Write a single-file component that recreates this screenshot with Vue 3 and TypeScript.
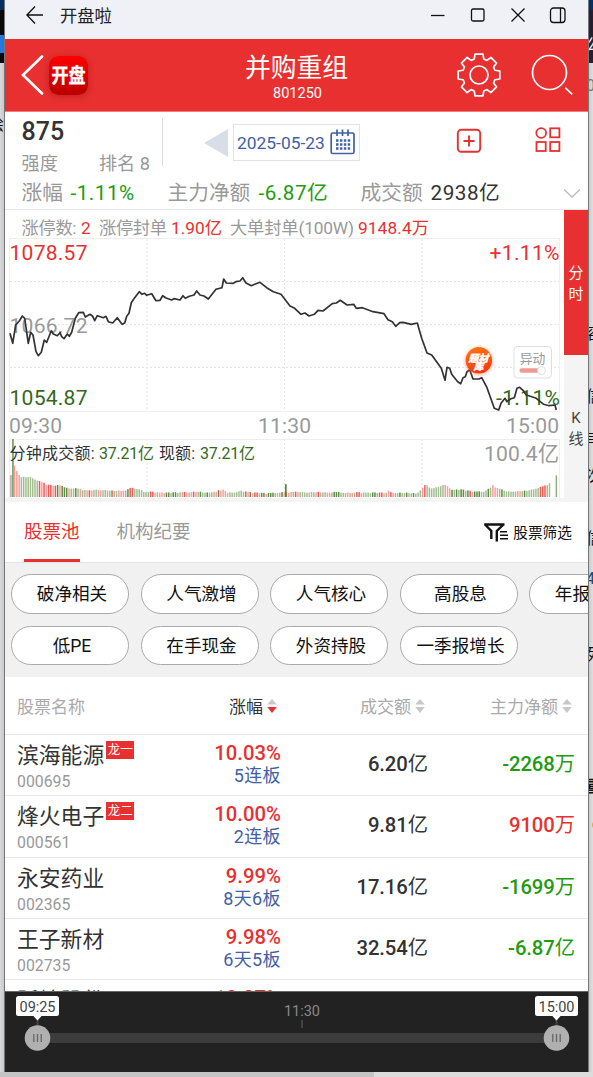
<script setup lang="ts">
interface Stock {
  name: string
  code: string
  tag?: string
  pct: string
  streak: string
  amount: string
  net: string
  unit: string
  up: boolean
}

const stocks: Stock[] = [
  { name: '滨海能源', code: '000695', tag: '龙一', pct: '10.03%', streak: '5连板', amount: '6.20', net: '-2268', unit: '万', up: false },
  { name: '烽火电子', code: '000561', tag: '龙二', pct: '10.00%', streak: '2连板', amount: '9.81', net: '9100', unit: '万', up: true },
  { name: '永安药业', code: '002365', pct: '9.99%', streak: '8天6板', amount: '17.16', net: '-1699', unit: '万', up: false },
  { name: '王子新材', code: '002735', pct: '9.98%', streak: '6天5板', amount: '32.54', net: '-6.87', unit: '亿', up: false },
  { name: '跃岭股份', code: '002725', pct: '10.07%', streak: '首板', amount: '4.12', net: '', unit: '', up: true }
]

const chipRows: string[][] = [
  ['破净相关', '人气激增', '人气核心', '高股息', '年报增长'],
  ['低PE', '在手现金', '外资持股', '一季报增长']
]

// Curve samples are stored in thirds of a pixel, afternoon relative to its own origin.
const morning = '30,295 38,325 47,270 58,258 67,243 74,250 85,325 92,292 99,300 108,350 115,362 124,352 133,315 140,322 154,287 160,297 172,302 180,293 185,305 192,311 202,297 208,304 215,292 226,250 236,233 250,232 256,246 270,238 278,244 284,257 292,242 310,248 318,244 325,260 338,264 352,248 366,268 374,264 380,244 387,235 394,203 403,190 418,170 426,178 434,175 440,181 455,176 468,197 480,196 488,182 498,189 515,195 522,191 540,195 549,182 556,190 568,184 582,180 590,168 600,180 612,183 625,192 648,163 666,158 671,132 679,144 700,145 708,140 720,138 728,128 738,144 754,152 768,146 780,142 800,158 820,170 843,178 870,213'
const afternoon = '5,220 24,238 36,234 48,243 64,238 75,226 90,228 118,206 130,204 142,196 162,210 182,208 190,220 208,218 240,230 273,236 285,254 298,260 308,274 320,263 330,262 355,268 373,264 386,310 402,354 416,360 445,400 456,436 462,397 470,400 476,418 494,440 503,446 510,428 517,425 522,410 530,404 540,432 558,432 566,428 582,458 604,520 617,525 624,505 636,490 642,500 652,492 664,488 672,460 680,457 690,466 700,480 712,484 730,490 752,508 768,512 786,510 790,525'

function samples(src: string, dx: number): number[][] {
  return src.split(' ').map((p) => {
    const [x, y] = p.split(',').map(Number)
    return [(x + dx) / 3 - 5, y / 3 + 25]
  })
}
const curve = [...samples(morning, 0), ...samples(afternoon, 879)]
const pricePath = 'M' + curve.map((p) => p[0].toFixed(1) + ' ' + p[1].toFixed(1)).join('L')

const volumeKeys: number[][] = [
  [43, 95], [50, 77], [57, 66], [64, 60], [92, 60], [110, 50], [130, 42], [140, 36], [165, 32], [180, 36], [195, 26], [240, 24], [250, 20], [270, 18], [290, 22], [340, 18], [380, 20], [390, 26], [418, 24], [430, 16], [460, 14], [500, 12], [590, 15], [620, 12], [650, 17], [672, 23], [680, 13], [712, 14], [720, 22], [730, 16], [760, 12], [800, 10], [850, 13], [870, 14], [939, 14], [1159, 12], [1163, 20], [1171, 13], [1249, 10], [1259, 18], [1267, 28], [1279, 38], [1289, 26], [1309, 28], [1334, 38], [1344, 32], [1354, 20], [1379, 22], [1419, 15], [1449, 15], [1469, 25], [1479, 36], [1486, 28], [1519, 16], [1579, 18], [1619, 28], [1644, 36], [1650, 46]
]
function volumeAt(x: number): number {
  for (let i = 1; i < volumeKeys.length; i++) {
    const a = volumeKeys[i - 1]
    const b = volumeKeys[i]
    if (x <= b[0]) return a[1] + ((b[1] - a[1]) * (x - a[0])) / (b[0] - a[0])
  }
  return 0
}
interface Bar { x: number; h: number; c: string }
const bars: Bar[] = [
  { x: 5.2, h: 22, c: '#aaaaaa' },
  { x: 7.2, h: 58, c: '#66934c' }
]
const reds = ['#f8a09d', '#f8a09d', '#ef5a58']
const greens = ['#a3bf92', '#a3bf92', '#5f8d45']
for (let i = 0; i < 237; i++) {
  const x = 43 + i * 6.8
  if (x > 1651) break
  const noise = (i * 37 + ((i * i) % 13)) % 7
  const red = i < 3 || (i > 10 && i < 19) || (Math.sin(i * 0.43) + Math.sin(i * 1.37) > 0.15 && i > 19 && i < 175) || (i > 175 && Math.sin(i * 0.6) > 0.75)
  const tone = noise > 4 ? 2 : 0
  bars.push({ x: x / 3 - 5.5, h: Math.max(3, (volumeAt(x) + noise * 0.5 - 1) / 3), c: red ? reds[tone] : greens[tone] })
}
bars.push({ x: 280.1, h: 12.8, c: '#3c7a1e' }, { x: 550.6, h: 21.7, c: '#8fb07c' })

const gearPath = (() => {
  const pts: string[] = []
  for (let i = 0; i < 8; i++) {
    const base = (i * Math.PI) / 4 - Math.PI / 2
    for (const [da, r] of [[-0.29, 16.6], [-0.19, 21.2], [0.19, 21.2], [0.29, 16.6]]) {
      pts.push((23 + r * Math.cos(base + da)).toFixed(2) + ' ' + (23 + r * Math.sin(base + da)).toFixed(2))
    }
  }
  return 'M' + pts.join('L') + 'Z'
})()
</script>

<template>
  <div class="desktop">
    <div class="edge left">
      <i class="navy"></i><i class="dark"></i><i class="blue"></i><i class="dark low"></i>
      <span class="clip l1">绘</span>
    </div>
    <main class="window">
      <header class="titlebar">
        <svg width="18" height="20" viewBox="0 0 18 20"><path d="M9 1.500L.9 10L9 18.500M1 10H17" /></svg>
        <span>开盘啦</span>
        <svg class="controls" width="140" height="18" viewBox="0 0 140 18">
          <path d="M1 9.500H14.500" /><rect x="41.500" y="3" width="12.500" height="12" rx="1.500" />
          <path d="M81.500 2.500L94.500 15.500M94.500 2.500L81.500 15.500" />
          <rect x="120.500" y="2" width="14.500" height="14.500" rx="3" /><path d="M130.500 2V16.500" />
        </svg>
      </header>

      <section class="hero">
        <div class="hero-left">
          <svg class="back" width="24" height="40" viewBox="0 0 24 40"><path d="M21 1.500L2 20L21 38.500" /></svg>
          <svg class="logo" width="39" height="39" viewBox="0 0 39 39">
            <defs><linearGradient id="lg" x2="0" y2="1"><stop stop-color="#ff0000" /><stop offset="1" stop-color="#b90000" /></linearGradient></defs>
            <rect width="39" height="39" rx="9" fill="url(#lg)" />
            <path d="M7 0V39M14 0V39M21 0V39M28 0V39M0 7H39M0 32H39" stroke="#d00" stroke-width=".5" opacity=".4" />
            <text x="2.500" y="27" textLength="34" lengthAdjust="spacingAndGlyphs" font-size="20.500" font-weight="700" fill="#fff" stroke="#fff" stroke-width=".35">开盘</text>
          </svg>
        </div>
        <div class="hero-title"><h1>并购重组</h1><p>801250</p></div>
        <div class="hero-right">
          <svg width="46" height="46" viewBox="0 0 46 46"><path :d="gearPath" /><circle cx="23" cy="23" r="9" /></svg>
          <svg width="44" height="46" viewBox="0 0 44 46"><circle cx="19.500" cy="20.500" r="17" /><path d="M35.200 35.700L42.200 42.300" /></svg>
        </div>
      </section>

      <section class="summary">
        <div class="strength">
          <b>875</b>
          <p><span>强度</span><span>排名 8</span></p>
        </div>
        <i class="prev"></i>
        <div class="date">
          <span>2025-05-23</span>
          <svg width="26" height="26" viewBox="0 0 26 26">
            <rect x="1.200" y="4" width="22.800" height="20.500" rx="1.500" /><path d="M7 .5V7M12.500 .5V7M18 .5V7" />
            <path class="dots" d="M6 11.500H20.500M6 15.500H20.500M6 19.500H20.500" />
          </svg>
        </div>
        <svg class="plus" width="26" height="26" viewBox="0 0 26 26"><rect x="1.800" y="1.800" width="22.400" height="22" rx="3.500" /><path d="M13 7.500V18.500M7.500 13H18.500" /></svg>
        <svg class="apps" width="26" height="26" viewBox="0 0 26 26"><circle cx="6.200" cy="6" r="4.900" /><rect x="15.200" y="1.300" width="9.200" height="9" /><rect x="1.500" y="15" width="9.200" height="9" /><rect x="15.200" y="15" width="9.200" height="9" /></svg>
      </section>
      <section class="metrics">
        <span>涨幅</span><b class="green">-1.11%</b><span>主力净额</span><b class="green">-6.87亿</b><span>成交额</span><b>2938亿</b>
        <svg width="18" height="11" viewBox="0 0 18 11"><path d="M1 1.500L9 9L17 1.500" /></svg>
      </section>

      <section class="intraday">
        <svg class="chart" width="559" height="292" viewBox="0 0 559 292">
          <g class="note">
            <text x="16.500" y="23.500" textLength="55">涨停数:</text><text class="red" x="76" y="23.500">2</text>
            <text x="94" y="23.500" textLength="68">涨停封单</text><text class="red" x="166" y="23.500" textLength="51">1.90亿</text>
            <text x="225" y="23.500" textLength="124">大单封单(100W)</text><text class="red" x="353" y="23.500" textLength="71">9148.4万</text>
          </g>
          <g class="frame"><rect x="4.500" y="28.500" width="550" height="173" /><path d="M4.500 288V229.500H554.500V288" /></g>
          <path class="grid" d="M5 71.500H554M5 114.500H554M5 157.500H554M142 29V201M279.500 29V201M417 29V201M142 229V287M279.500 229V287M417 229V287" />
          <rect v-for="(b, i) in bars" :key="i" :x="b.x" :y="287 - b.h" width="1.500" :height="b.h" :fill="b.c" />
          <g class="big">
            <text class="red" x="4.500" y="50" textLength="78">1078.57</text>
            <text class="gray" x="4.500" y="122.500" textLength="78">1066.72</text>
            <text class="dgreen" x="4.500" y="195" textLength="78">1054.87</text>
            <text class="red" x="484.500" y="50" textLength="70">+1.11%</text>
            <text class="gray" x="4" y="222.500" textLength="53">09:30</text>
            <text class="gray" x="253" y="222.500" textLength="53">11:30</text>
            <text class="gray" x="501" y="222.500" textLength="53">15:00</text>
            <text class="gray" x="479" y="251" textLength="75">100.4亿</text>
          </g>
          <g class="vol">
            <text x="4.500" y="248.500" textLength="85">分钟成交额:</text><text class="dgreen" x="94" y="248.500" textLength="55">37.21亿</text>
            <text x="154" y="248.500" textLength="36">现额:</text><text class="dgreen" x="195" y="248.500" textLength="55">37.21亿</text>
          </g>
          <g class="big"><text class="dgreen" x="491" y="195" textLength="64">-1.11%</text></g>
          <path class="price" :d="pricePath" />
          <defs><linearGradient id="og" x2=".3" y2="1"><stop stop-color="#ff7a10" /><stop offset="1" stop-color="#fa3a12" /></linearGradient></defs>
          <circle cx="473.800" cy="150.300" r="13.200" fill="url(#og)" class="glow" />
          <g class="badge-text"><text x="463.500" y="151.500" textLength="20" lengthAdjust="spacingAndGlyphs">题材</text><text x="468.500" y="159.500">库</text></g>
          <rect x="509" y="136.500" width="37.500" height="31.500" rx="3.500" fill="#fff" fill-opacity=".85" stroke="#dedede" />
          <text x="514.800" y="152.500" font-size="12.800" fill="#999" textLength="25.500">异动</text>
          <rect x="514.500" y="158.300" width="22" height="4.500" rx="2" fill="#ee9a97" /><circle cx="536.500" cy="160.500" r="4" fill="#fff" stroke="#ddd" />
        </svg>
        <aside><div class="on"><span>分</span><span>时</span></div><div><span>K</span><span>线</span></div></aside>
      </section>

      <nav class="tabs">
        <span class="active">股票池</span><span>机构纪要</span>
        <div class="filter">
          <svg width="25" height="20" viewBox="0 0 25 20"><path d="M.2 1.500H20.500M1.500 2L7.300 8V16M19 2L12.800 8V18.500" /><path class="thin" d="M16 8.700H23M16 12.200H24M16 15.700H24" /></svg>
          <span>股票筛选</span>
        </div>
      </nav>

      <section class="chips">
        <div v-for="(row, i) in chipRows" :key="i" class="chip-row"><button v-for="c in row" :key="c">{{ c }}</button></div>
      </section>

      <section class="table">
        <div class="thead">
          <span>股票名称</span>
          <span v-for="(h, i) in ['涨幅', '成交额', '主力净额']" :key="h" class="sort" :class="{ desc: i === 0 }">{{ h }}<svg width="10" height="14" viewBox="0 0 10 14"><path d="M5 0L9.800 5.500H.2Z" /><path class="down" d="M5 14L9.800 8H.2Z" /></svg></span>
        </div>
        <article v-for="s in stocks" :key="s.code">
          <div class="name"><p>{{ s.name }}<i v-if="s.tag">{{ s.tag }}</i></p><small>{{ s.code }}</small></div>
          <div class="change"><b>{{ s.pct }}</b><span>{{ s.streak }}</span></div>
          <div class="money"><b>{{ s.amount }}</b>亿</div>
          <div class="money" :class="s.up ? 'red' : 'green'"><b>{{ s.net }}</b>{{ s.unit }}</div>
        </article>
      </section>

      <footer class="timeline">
        <svg width="583" height="81" viewBox="0 0 583 81">
          <path d="M0 .5H583" stroke="#666" />
          <path d="M32.500 26V38M297 29V37M551.500 26V38" stroke="#444" stroke-width="2" />
          <rect x="32" y="42" width="520" height="10" fill="#3c3c3c" />
          <g v-for="(t, i) in ['09:25', '15:00']" :key="t" :transform="`translate(${i ? 551.5 : 32.5} 0)`">
            <path d="M-5 24H5L0 29.500Z" fill="#fff" /><rect x="-21.500" y="5" width="43" height="20" rx="2.500" fill="#fff" />
            <text x="0" y="20.500" text-anchor="middle" textLength="36" fill="#444">{{ t }}</text>
            <circle cy="47" r="12.800" fill="#b0b0b0" /><path d="M-3.700 43V51M0 43V51M3.700 43V51" stroke="#666" stroke-width="1.300" />
          </g>
          <text x="297" y="24.500" text-anchor="middle" textLength="36" fill="#888">11:30</text>
        </svg>
      </footer>
    </main>
    <div class="edge right">
      <i class="navy"></i><i class="plum"></i>
      <span class="clip r1">公</span><span class="clip r2">0</span><span class="clip r3">容</span><span class="clip r4">信</span><span class="clip r5">≣</span><span class="clip r6">次</span><span class="clip r7">信</span><span class="clip r8">4</span><span class="clip r9">列</span><span class="clip r10">重</span>
      <i class="dot"></i>
    </div>
    <i class="base"></i>
  </div>
</template>

<style>
body { background: #dedfe0; overflow: hidden; }
</style>

<style scoped>
* { box-sizing: border-box; }
.desktop { position: relative; display: flex; width: 593px; height: 1077px; overflow: hidden; background: #dedfe0; font-family: Roboto, "Noto Sans CJK SC", sans-serif; color: #333; }
.edge { position: relative; width: 5px; height: 1077px; overflow: hidden; }
.edge i { display: block; }
.left { border-right: 1px solid #777; background: linear-gradient(90deg, #d8d9da, #c8c9ca); }
.right { border-left: 1px solid #77787a; background: linear-gradient(90deg, #c9caca, #e0e0e1); }
.navy { height: 10px; background: #003068; }
.dark { height: 25px; background: #080808; }
.dark.low { height: 10px; }
.blue { height: 18px; background: #2478de; }
.plum { height: 53px; background: #291d30; }
.clip { position: absolute; left: -3px; font-size: 16px; line-height: 20px; color: #111; white-space: nowrap; }
.l1 { left: -12px; top: 115px; }
.r1 { top: 35px; color: #eee; } .r2 { top: 76px; color: #777; } .r3 { top: 324px; } .r4 { top: 387px; } .r5 { top: 428px; } .r6 { top: 466px; }
.r7 { top: 529px; } .r8 { top: 569px; color: #164878; } .r9 { top: 645px; } .r10 { top: 777px; font-weight: 700; }
.edge .dot { position: absolute; left: 3px; top: 820px; width: 10px; height: 10px; border-radius: 5px; background: #e5a53a; }
.base { position: absolute; left: 0; right: 0; top: 1072px; height: 5px; background: linear-gradient(90deg, #c4c4c4 374px, #dcdcdc 374px); border-bottom: 0; }
.window { width: 583px; height: 1072px; display: flex; flex-direction: column; background: #fff; overflow: hidden; position: relative; z-index: 1; }
.window > * { flex: none; }
svg { display: block; fill: none; }
h1, p { margin: 0; font-weight: 400; }

.titlebar { height: 39px; padding: 0 0 10px 21px; display: flex; align-items: center; background: #f0f1f6; font-size: 17.3px; color: #222; }
.titlebar svg { stroke: #111; stroke-width: 1.3; }
.titlebar > span { margin-left: 16px; }
.titlebar .controls { margin-left: auto; margin-right: 18px; }

.hero { height: 73px; display: grid; grid-template-columns: 150px 1fr 150px; background: #e83030; border-bottom: 1px solid #ef7f7f; color: #fff; }
.hero-left { display: flex; align-items: center; padding-left: 16px; }
.back { stroke: #fff; stroke-width: 2.6; stroke-linecap: round; }
.logo { margin-left: 4px; border-radius: 9px; box-shadow: 0 1px 6px #7c101066; }
.hero-title { text-align: center; padding: 11px 0 0; }
h1 { font-size: 25.8px; line-height: 36px; }
.hero-title p { font-size: 14.5px; line-height: 16px; padding-left: 2px; }
.hero-right { display: flex; align-items: center; gap: 28px; stroke: #fff; stroke-width: 1.7; stroke-linejoin: round; padding-left: 18px; }
.hero-right svg { flex: none; }

.summary { height: 65px; display: flex; align-items: flex-start; padding-top: 6px; }
.strength { width: 158px; height: 48px; padding-left: 16.5px; border-right: 1px solid #ddd; }
.strength b { display: block; font-size: 25px; line-height: 27px; font-weight: 500; }
.strength p { display: flex; gap: 41px; width: 140px; font-size: 18.2px; line-height: 28px; margin-top: 5px; color: #999; white-space: nowrap; }
.prev { margin: 11px 0 0 41px; border: solid transparent; border-width: 14px 24px 14px 0; border-right-color: #d8dee7; }
.date { margin: 6px 0 0 5px; width: 127px; height: 37px; border: 1px solid #e2e2e2; display: flex; align-items: center; justify-content: space-between; padding: 0 3px 0 3px; color: #4161a4; font-size: 17.4px; white-space: nowrap; }
.date svg { stroke: #4161a4; stroke-width: 1.7; margin-bottom: 1px; }
.date .dots { stroke-width: 2.6; stroke-dasharray: 2.5 1.4; }
.plus { margin: 10px 0 0 96px; stroke: #e83030; stroke-width: 1.9; }
.apps { margin: 9px 0 0 53px; stroke: #e83030; stroke-width: 1.8; }
.metrics { height: 33px; display: grid; grid-template-columns: 49px 97px 91px 102px 70px 132px 18px; align-items: center; padding-left: 16.5px; font-size: 20.7px; line-height: 33px; border-bottom: 1px solid #e6e6e6; color: #999; white-space: nowrap; }
.metrics b { font-weight: 400; color: #333; letter-spacing: .5px; }
.metrics svg { stroke: #bbb; stroke-width: 1.3; }
.metrics b.green, .green { color: #219b10; }
.red { color: #e83030; fill: #e83030; }

.intraday { height: 292px; display: flex; border-bottom: 4px solid #f4f4f4; }
.chart { overflow: hidden; }
.chart .note { font-size: 17.3px; fill: #999; }
.chart .big { font-size: 21.1px; }
.chart .vol { font-size: 16px; fill: #333; }
.chart .red { fill: #e83030; } .chart .gray { fill: #999; } .chart .dgreen { fill: #32691b; }
.frame { stroke: #eee; }
.grid { stroke: #e4e4e4; stroke-dasharray: 2 2; }
.price { stroke: #333; stroke-width: 1.7; stroke-linejoin: round; }
.glow { filter: drop-shadow(0 1px 2px #ff704099); }
.badge-text { fill: #fff; stroke: #fff; stroke-width: .3; font-size: 10px; font-weight: 900; font-style: italic; }
aside { width: 24px; height: 291px; }
aside div { height: 145px; padding-top: 3px; background: #f4f4f4; display: flex; flex-direction: column; align-items: center; justify-content: center; font-size: 15px; line-height: 21px; color: #444; }
aside .on { background: #e83030; color: #fff; }

.tabs { height: 61px; display: flex; align-items: stretch; padding-left: 19px; border-bottom: 1px solid #e4e4e4; font-size: 18.5px; line-height: 60px; color: #999; }
.tabs > span { height: 60px; }
.tabs > span + span { margin-left: 37px; }
.active { color: #e83030; border-bottom: 3px solid #e83030; }
.filter { margin-left: auto; margin-right: 16px; display: flex; align-items: center; gap: 4px; font-size: 14.7px; color: #111; padding-top: 1px; }
.filter svg { stroke: #111; stroke-width: 2.4; }
.filter .thin { stroke-width: 1.5; }

.chips { height: 114px; padding: 11px 0 0 6px; background: #f1f1f1; display: flex; flex-direction: column; gap: 12px; }
.chip-row { display: flex; gap: 11.5px; }
button { flex: none; width: 118px; height: 39.5px; border: 1px solid #aaa; border-radius: 20px; background: #fff; padding: 0 0 2px 4px; font: inherit; font-size: 17.6px; color: #111; white-space: nowrap; }

.table { height: 314px; overflow: hidden; }
.thead { height: 58px; display: grid; grid-template-columns: 108px 152px 148px 147px; align-items: center; padding-left: 12px; font-size: 17px; color: #aaa; border-bottom: 1px solid #e8e8e8; }
.sort { display: flex; align-items: center; justify-content: flex-end; gap: 4px; white-space: nowrap; }
.sort svg { fill: #c8c8c8; }
.desc { color: #333; } .desc .down { fill: #e83030; }
article { height: 61.3px; display: grid; grid-template-columns: 120px 144px 147px 147px; padding-left: 12px; border-bottom: 1px solid #e8e8e8; }
.name { white-space: nowrap; }
.name p { display: flex; font-size: 21.8px; line-height: 32px; padding-top: 5px; height: 37px; }
.name i { margin: 1px 0 0 2px; width: 28px; height: 18px; background: #e83030; color: #fff; font-size: 12.5px; line-height: 17px; text-align: center; font-style: normal; }
.name small { display: block; font-size: 15.8px; line-height: 20px; color: #999; }
.change { text-align: right; padding-top: 7px; color: #4161a4; font-size: 18px; }
.change b { display: block; color: #e83030; font-size: 20.3px; line-height: 22px; font-weight: 500; }
.change span { display: block; line-height: 23px; letter-spacing: .4px; }
.money { text-align: right; font-size: 20.3px; line-height: 59px; white-space: nowrap; }
.money b { font-weight: 500; letter-spacing: -.1px; }
.timeline { height: 81px; background: #222; }
.timeline text { font-size: 14.5px; }
</style>
